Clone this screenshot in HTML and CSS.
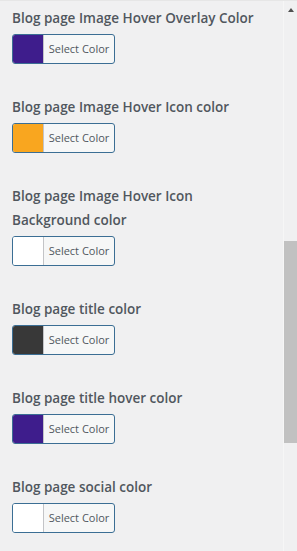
FILE: index.html
```html
<!DOCTYPE html>
<html lang="en">
<head>
    <meta charset="UTF-8">
    <meta name="viewport" content="width=device-width, initial-scale=1.0">
    <title>Blog Page Colors</title>
    <link rel="stylesheet" href="styles.css">
</head>
<body>

    <div class="panel">
        <div class="controls">
            <div class="control">
                <span class="control-title">Blog page Image Hover Overlay Color</span>
                <button class="color-result"><span class="swatch swatch-purple"></span><span class="result-text">Select Color</span></button>
            </div>

            <div class="control">
                <span class="control-title">Blog page Image Hover Icon color</span>
                <button class="color-result"><span class="swatch swatch-orange"></span><span class="result-text">Select Color</span></button>
            </div>

            <div class="control">
                <span class="control-title">Blog page Image Hover Icon Background color</span>
                <button class="color-result"><span class="swatch swatch-white"></span><span class="result-text">Select Color</span></button>
            </div>

            <div class="control">
                <span class="control-title">Blog page title color</span>
                <button class="color-result"><span class="swatch swatch-dark"></span><span class="result-text">Select Color</span></button>
            </div>

            <div class="control">
                <span class="control-title">Blog page title hover color</span>
                <button class="color-result"><span class="swatch swatch-purple"></span><span class="result-text">Select Color</span></button>
            </div>

            <div class="control">
                <span class="control-title">Blog page social color</span>
                <button class="color-result"><span class="swatch swatch-white"></span><span class="result-text">Select Color</span></button>
            </div>
        </div>

        <!-- fake scrollbar of the customizer pane -->
        <div class="scroll-track">
            <span class="scroll-arrow"></span>
            <span class="scroll-thumb"></span>
        </div>
    </div>

</body>
</html>
```

FILE: styles.css
```css
/* customizer pane: blog page colour controls */

:root {
    --background-color: #f0f0f1;
    --text-color: #50575e;
    --button-border: #3b6e94;
    --button-face: #f6f7f7;
    --divider-color: #c3c4c7;
    --thumb-color: #c1c1c1;
}

body {
    margin: 0;
    background-color: var(--background-color);
    font-family: 'Open Sans', 'Noto Sans', sans-serif;
    color: var(--text-color);
}

.panel {
    display: flex;
    height: 551px;
    border-top: 1px solid #e6e6e6;
    box-sizing: border-box;
    overflow: hidden;
}

/* --- Controls list --- */
.controls {
    flex: 1;
    padding: 5px 0 0 12px;
}

.control {
    margin-bottom: 31px;
}

.control-title {
    display: block;
    max-width: 255px;
    font-size: 13.5px;
    font-weight: 600;
    line-height: 24px;
    margin-bottom: 4px;
}

/* --- Colour picker button --- */
.color-result {
    display: flex;
    width: 103px;
    height: 30px;
    padding: 0;
    border: 1px solid var(--button-border);
    border-radius: 3px;
    background-color: var(--button-face);
    overflow: hidden;
    cursor: pointer;
    box-sizing: border-box;
}

.swatch {
    width: 30px;
    height: 100%;
}

.swatch-purple { background-color: #3e1d8c; }
.swatch-orange { background-color: #f9a61f; }
.swatch-white  { background-color: #ffffff; }
.swatch-dark   { background-color: #383838; }

.result-text {
    flex: 1;
    border-left: 1px solid var(--divider-color);
    font-family: 'Open Sans', 'Noto Sans', sans-serif;
    font-size: 11px;
    line-height: 28px;
    color: var(--text-color);
    text-align: center;
}

/* --- Scrollbar --- */
.scroll-track {
    width: 13px;
    display: flex;
    flex-direction: column;
    align-items: center;
    border-left: 1px solid #f6f6f6;
}

.scroll-arrow {
    margin-top: 7px;
    width: 0;
    height: 0;
    border-left: 3.5px solid transparent;
    border-right: 3.5px solid transparent;
    border-bottom: 4px solid #505050;
}

.scroll-thumb {
    margin-top: 229px;
    width: 13px;
    height: 202px;
    background-color: var(--thumb-color);
}
```
